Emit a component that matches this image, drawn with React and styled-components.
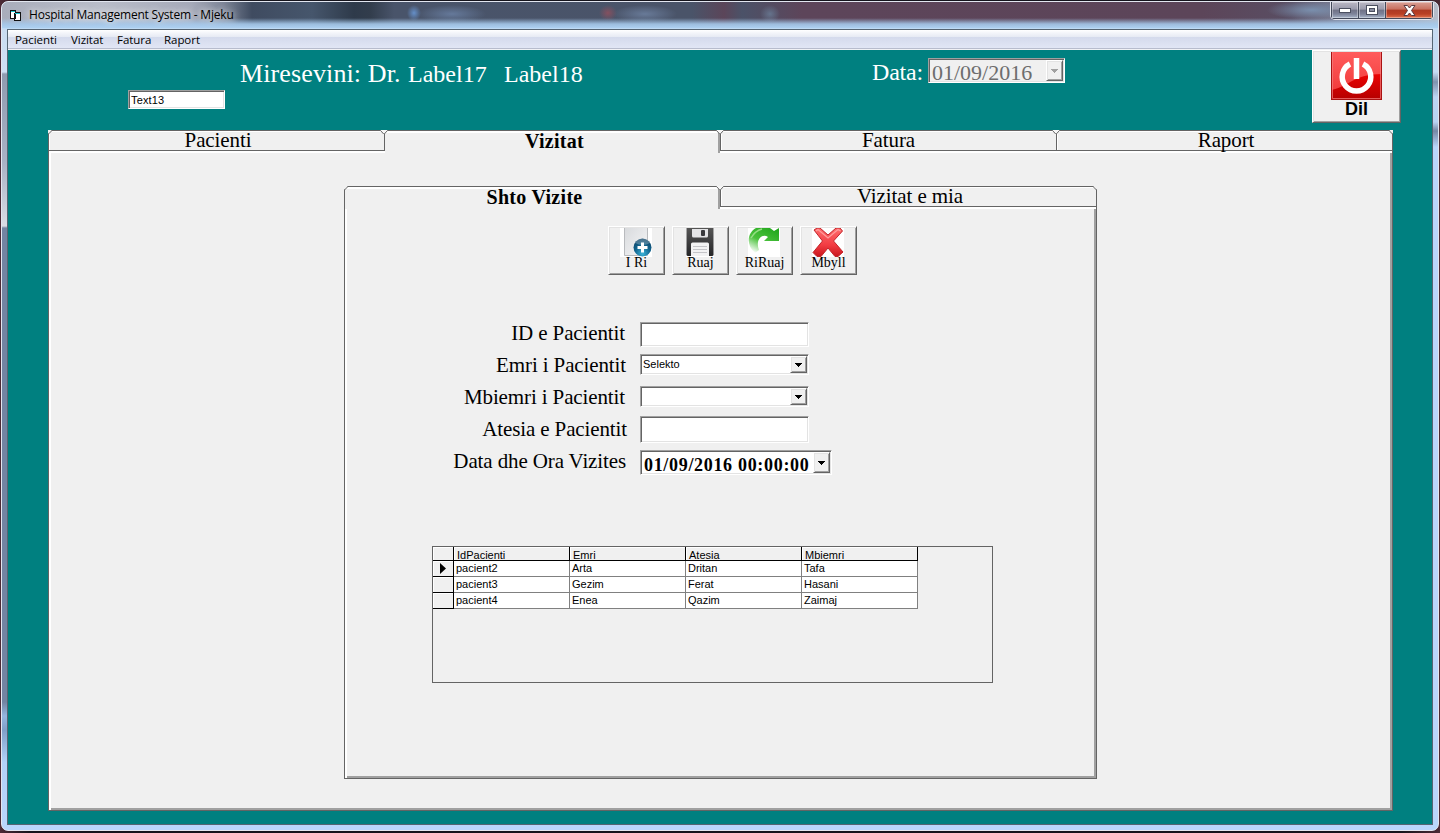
import React from "react";
import styled, { createGlobalStyle, css } from "styled-components";

const serif = `"Liberation Serif", "Times New Roman", serif`;
const sans = `"Liberation Sans", Arial, sans-serif`;
const ui = `"Open Sans", "Noto Sans", sans-serif`;

const face = "#f0f0f0";
const dark = "#646464";
const mid = "#a0a0a0";
const teal = "#008080";

const Global = createGlobalStyle`
  * { box-sizing: border-box; }
  html, body { margin: 0; padding: 0; background: #23262d; overflow: hidden; }
  svg { display: block; }
`;

const sunken = css`
  border: 1px solid;
  border-color: ${mid} #fff #fff ${mid};
  box-shadow: inset 1px 1px 0 ${dark}, inset -1px -1px 0 #e3e3e3;
`;

const raised = css`
  border: 1px solid;
  border-color: #fff ${dark} ${dark} #fff;
  box-shadow: inset 1px 1px 0 #e3e3e3, inset -1px -1px 0 ${mid};
  background: ${face};
`;

const Desktop = styled.div`
  width: 1440px;
  height: 833px;
  padding: 1px 1px 2px;
  background: linear-gradient(90deg, #4c2a35 0, #15141c 30px, #15141c 1400px, #4c2a35);
`;

const Frame = styled.div`
  height: 830px;
  border: 1px solid #e2e6f0;
  border-radius: 7px;
  overflow: hidden;
  padding: 0 5px 5px;
  display: flex;
  flex-direction: column;
  background:
    linear-gradient(180deg, #c4d8ee 0, #cfe0f4 70px, #8f9bb0 72px, #a9b2c4 160px, #d9dce4 224px, #7284a2 226px, #7284a2 700px, #94b6df 714px, #7f9fc8 728px, #b3d2f8 760px, #b9d6fb) left / 6px 100% no-repeat,
    linear-gradient(180deg, #c4d8ee 0, #c7dcf4 70px, #7f93ae 80px, #bcd5f3 95px, #b9d3f2 120px, #7688a5 129px, #b9d6fb 145px) right / 6px 100% no-repeat,
    linear-gradient(#b9d6fb, #b9d6fb);
`;

const TitleBar = styled.div`
  flex: none;
  height: 27px;
  margin: 0 -5px;
  padding-left: 7px;
  display: flex;
  align-items: flex-start;
  background:
    linear-gradient(180deg, transparent 0, transparent 16px, rgba(165, 200, 234, .9) 22px, #add0f1 26px, #cfe4f8 27px),
    radial-gradient(ellipse 7px 8px at 412px 11px, #658fc8, transparent),
    radial-gradient(ellipse 34px 9px at 450px 12px, #65799a, transparent),
    radial-gradient(ellipse 9px 8px at 606px 11px, #85505f, transparent),
    radial-gradient(ellipse 32px 9px at 643px 12px, #687a98, transparent),
    radial-gradient(ellipse 10px 9px at 768px 12px, #65738c, transparent),
    radial-gradient(ellipse 45px 10px at 1310px 8px, #7a8fad, transparent),
    linear-gradient(90deg, #a9adbb 0, #b9bdc9 100px, #a5a9b8 190px, #7c8496 222px, #3f4b60 250px, #46566c 310px, #2e3a4a 352px, #323d4c 368px, #49546a 392px, #4a5469 690px, #5b4559 722px, #4b5268 740px, #5d455a 800px, #5c4559 1200px, #594e63 1290px, #7b7d92 1340px, #b6bdca);
`;

const AppIcon = styled.svg`
  margin-top: 7px;
  flex: none;
`;

const Caption = styled.div`
  margin: 4px auto 0 6px;
  font: 12px/18px ${ui};
  letter-spacing: -0.2px;
  color: #000;
  white-space: nowrap;
  text-shadow: 0 0 6px rgba(255, 255, 255, .9), 0 0 10px rgba(255, 255, 255, .6);
`;

const Controls = styled.div`
  display: flex;
  height: 18px;
  margin-right: 4px;
  border: 1px solid #e4e6ee;
  border-top: 0;
  border-radius: 0 0 5px 5px;
  overflow: hidden;
  box-shadow: inset 0 0 0 1px #3a3f50;
`;

const Control = styled.div`
  width: ${(p) => p.$w}px;
  display: flex;
  align-items: center;
  justify-content: center;
  border: 1px solid #444a5b;
  border-top: 0;
  box-shadow: inset 0 0 0 1px rgba(255, 255, 255, .35);
  background: ${(p) =>
    p.$close
      ? "linear-gradient(180deg, #d9a096 0, #c8705f 45%, #ad3a23 50%, #b94024 75%, #e0714d)"
      : "linear-gradient(180deg, #b9b7c4 0, #9a9bac 45%, #707286 50%, #7d8399 75%, #a7b4c8)"};
  & + & { border-left: 0; }
`;

const Client = styled.div`
  flex: 1;
  border: 1px solid #566573;
  display: flex;
  flex-direction: column;
  background: ${teal};
`;

const MenuBar = styled.div`
  height: 20px;
  flex: none;
  display: flex;
  gap: 14px;
  padding-left: 7px;
  font: 11.5px/20px ${ui};
  color: #000;
  background: linear-gradient(180deg, #fff 0, #f3f5fa 3px, #e6eaf4 7px, #d4daec 7px, #e1e6f5 18px, #b7bccd 18px, #b7bccd 19px, #f0f1f5 19px);
`;

const MenuItem = styled.span`
  width: ${(p) => p.$w}px;
  white-space: nowrap;
  letter-spacing: -0.05px;
`;

const Header = styled.div`
  height: 80px;
  flex: none;
  display: flex;
  align-items: flex-start;
`;

const TextBox = styled.div`
  ${sunken}
  background: #fff;
  width: ${(p) => p.$w}px;
  height: ${(p) => p.$h}px;
  padding-left: 2px;
  font: 11px/${(p) => p.$h - 2}px ${sans};
  color: #000;
`;

const IdBox = styled(TextBox)`
  margin: 40px 0 0 120px;
  line-height: 18px;
  letter-spacing: 0.15px;
`;

const Welcome = styled.div`
  margin: ${(p) => p.$mt || 8}px 0 0 ${(p) => p.$ml}px;
  width: ${(p) => p.$w}px;
  font: ${(p) => p.$size}px/32px ${serif};
  letter-spacing: ${(p) => p.$ls || 0}px;
  color: #fff;
  white-space: nowrap;
`;

const DateBox = styled.div`
  ${sunken}
  display: flex;
  justify-content: space-between;
  width: ${(p) => p.$w}px;
  height: ${(p) => p.$h}px;
  padding: 1px 1px 1px 3px;
  background: ${(p) => (p.$disabled ? face : "#fff")};
  color: ${(p) => (p.$disabled ? "#6d6d6d" : "#000")};
  font: ${(p) => (p.$disabled ? "22px" : "bold 18px")}/${(p) => (p.$disabled ? 25 : 26)}px ${serif};
  letter-spacing: ${(p) => (p.$disabled ? 0 : 0.68)}px;
  white-space: nowrap;
`;

const HeaderDate = styled(DateBox)`
  margin: 8px 0 0 4px;
`;

const DropButton = styled.div`
  ${raised}
  flex: none;
  width: 17px;
  display: flex;
  align-items: center;
  justify-content: center;
`;

const ExitButton = styled.div`
  ${raised}
  width: 89px;
  height: 73px;
  margin-left: 247px;
  padding-top: 1px;
  display: flex;
  flex-direction: column;
  align-items: center;
  font: bold 18px/18px ${sans};
  color: #000;
`;

const TabControl = styled.div`
  width: ${(p) => p.$w}px;
  height: ${(p) => p.$h}px;
  margin: ${(p) => p.$m};
  display: flex;
  flex-direction: column;
`;

const TabStrip = styled.div`
  height: 21px;
  flex: none;
  display: flex;
`;

const Tab = styled.div`
  position: relative;
  width: ${(p) => p.$w}px;
  height: ${(p) => (p.$active ? 23 : 21)}px;
  border-top: 1px solid ${dark};
  border-bottom: ${(p) => (p.$active ? 0 : 1)}px solid ${dark};
  border-left: ${(p) => (p.$edge ? 1 : 0)}px solid ${dark};
  border-right: ${(p) => (p.$active ? 0 : 1)}px solid ${dark};
  box-shadow: ${(p) =>
    p.$active
      ? `inset 0 2px 0 #fff, inset -2px 0 0 ${mid}`
      : "inset 1px 1px 0 #fff"};
  background: ${face};
  color: #000;
  text-align: center;
  font: ${(p) => (p.$active ? "bold 20px" : "21px")}/${(p) => (p.$active ? 21 : 19)}px ${serif};
  letter-spacing: ${(p) => (p.$active ? 0.3 : -0.1)}px;
  padding-left: ${(p) => (p.$active ? 4 : p.$pl ?? 3)}px;
`;

const Notch = styled.svg`
  position: absolute;
  z-index: 2;
  top: -1px;
  ${(p) => (p.$side === "left" ? "left: -1px;" : `right: ${p.$mid ? -4 : -1}px;`)}
`;

const TabPage = styled.div`
  flex: 1;
  border: 1px solid ${dark};
  border-top: 0;
  box-shadow: inset 2px 2px 0 #fff, inset -2px -2px 0 ${mid};
  background: ${face};
  display: flex;
  flex-direction: column;
`;

const Toolbar = styled.div`
  display: flex;
  gap: 7px;
  margin: 19px 0 0 263px;
`;

const ToolButton = styled.div`
  ${raised}
  width: 57px;
  height: 49px;
  padding: 1px 1px 0 0;
  display: flex;
  flex-direction: column;
  align-items: center;
  color: #000;
  font: 14px/16px ${serif};
  white-space: nowrap;
`;

const ToolLabel = styled.span`
  margin: -2px 0 0 1px;
`;

const Form = styled.div`
  display: flex;
  flex-direction: column;
  margin-top: 43px;
`;

const Field = styled.div`
  height: 32px;
  display: flex;
  padding-left: 95px;
`;

const Label = styled.div`
  width: ${(p) => 185 + (p.$dx || 0)}px;
  margin-right: ${(p) => 15 - (p.$dx || 0)}px;
  font: 21px/30px ${serif};
  letter-spacing: -0.12px;
  text-align: right;
  color: #000;
  white-space: nowrap;
`;

const Slot = styled.div`
  padding-top: ${(p) => p.$top}px;
`;

const Combo = styled.div`
  ${sunken}
  width: 169px;
  height: 21px;
  background: #fff;
  display: flex;
  justify-content: space-between;
  padding: 1px 1px 1px 2px;
  font: 11px/17px ${sans};
  color: #000;
`;

const DataGrid = styled.div`
  margin: 68px 0 0 87px;
  width: 561px;
  height: 137px;
  border: 1px solid ${dark};
`;

const GridRow = styled.div`
  display: grid;
  grid-template-columns: 21px repeat(4, 116px);
  grid-template-rows: ${(p) => (p.$head ? 14 : 16)}px;
  font: 11px/${(p) => (p.$head ? 16 : 14)}px ${sans};
  color: #000;
`;

const HeadCell = styled.div`
  border-right: 1px solid #000;
  border-bottom: 1px solid #000;
  box-shadow: inset 1px 1px 0 #fff;
  padding-left: 3px;
  background: ${face};
`;

const Selector = styled(HeadCell)`
  display: flex;
  align-items: center;
  padding-left: 7px;
`;

const Cell = styled.div`
  border-right: 1px solid #808080;
  border-bottom: 1px solid #808080;
  background: #fff;
  padding-left: 2px;
`;

const Arrow = ({ color = "#000" }) => (
  <svg width="7" height="4" viewBox="0 0 7 4" shapeRendering="crispEdges">
    <path d="M0 0h7v1H0zM1 1h5v1H1zM2 2h3v1H2zM3 3h1v1H3z" fill={color} />
  </svg>
);

const MidNotch = () => (
  <Notch $mid width="8" height="5" viewBox="0 0 8 5">
    <path d="M0 0H8L4.5 4H3.5z" fill="#f6f6f6" />
    <path d="M0.3 0.3L3.7 4M7.7 0.3L4.3 4" stroke={dark} fill="none" />
  </Notch>
);

const EndNotch = ({ side }) => (
  <Notch $side={side} width="5" height="5" viewBox="0 0 5 5">
    <g transform={side === "right" ? "translate(5 0) scale(-1 1)" : undefined}>
      <path d="M0 0H4L0 4z" fill={face} />
      <path d="M0.3 4.2L4.2 0.3" stroke={dark} />
    </g>
  </Notch>
);

const NewIcon = () => (
  <svg width="32" height="29" viewBox="0 0 32 29">
    <defs>
      <linearGradient id="page" x1="0" y1="0" x2="1" y2="1">
        <stop offset="0" stopColor="#d8dadd" />
        <stop offset="1" stopColor="#f7f7f8" />
      </linearGradient>
      <radialGradient id="globe" cx=".5" cy=".85" r=".8">
        <stop offset="0" stopColor="#3bb3d8" />
        <stop offset=".55" stopColor="#12658f" />
        <stop offset="1" stopColor="#0d4468" />
      </radialGradient>
    </defs>
    <rect width="32" height="29" fill="#fff" />
    <path d="M4.5 0V27.5H27.5V0" fill="url(#page)" stroke="#b9bbbe" />
    <circle cx="22.5" cy="19.5" r="9" fill="url(#globe)" />
    <path d="M15 15a8.5 8.5 0 0 1 15 0q-7 4-15 0z" fill="#fff" opacity=".25" />
    <path d="M22.5 14.5v10M17.5 19.5h10" stroke="#fff" strokeWidth="3" />
  </svg>
);

const SaveIcon = () => (
  <svg width="32" height="29" viewBox="0 0 32 29">
    <defs>
      <linearGradient id="disk" x1="0" y1="0" x2="0" y2="1">
        <stop offset="0" stopColor="#555" />
        <stop offset="1" stopColor="#252527" />
      </linearGradient>
    </defs>
    <rect x="2" width="28" height="29" fill="#fff" />
    <path d="M2.500 0H29.500V26.5Q29.500 28 28 28H4Q2.500 28 2.500 26.5z" fill="url(#disk)" />
    <path d="M8 1H24V8Q24 9.5 22.5 9.500H9.5Q8 9.5 8 8z" fill="#e4e4e6" />
    <rect x="17" y="2" width="4" height="6" rx="1" fill="#39393c" />
    <path d="M7 16Q7 14.5 8.5 14.5H23.5Q25 14.5 25 16V28H7z" fill="#f2f2f3" />
    <path d="M9 18.5H23M9 21.5H23M9 24.5H23" stroke="#c4c4c8" />
  </svg>
);

const RedoIcon = () => (
  <svg width="32" height="29" viewBox="0 0 32 29">
    <defs>
      <linearGradient id="redo" x1=".8" y1="0" x2=".2" y2="1">
        <stop offset="0" stopColor="#23a81e" />
        <stop offset=".55" stopColor="#4cc23d" />
        <stop offset="1" stopColor="#fff" />
      </linearGradient>
    </defs>
    <rect width="32" height="29" fill="#fff" />
    <path d="M7 25C-2 17 -1 5 8 0H22L26 3L31 0V13H16L20 9C14 5 7 12 11 22Z" fill="url(#redo)" />
    <path d="M3 10Q7 3 14 1" stroke="#95dd83" strokeWidth="1.5" fill="none" />
  </svg>
);

const CloseIcon = () => (
  <svg width="32" height="29" viewBox="0 0 32 29">
    <defs>
      <linearGradient id="cross" x1="0" y1="0" x2="0" y2="1">
        <stop offset="0" stopColor="#ff6d6d" />
        <stop offset=".6" stopColor="#f23c43" />
        <stop offset="1" stopColor="#c9161d" />
      </linearGradient>
    </defs>
    <rect width="32" height="29" fill="#fff" />
    <path d="M2 2L5 0H8L16 7L24 0H28L30.500 3L21.500 13L31 24L26 28.500H23L16 20L9 28.500H5L1 24.500L10.500 13z" fill="url(#cross)" stroke="#c2242a" />
    <path d="M4 3L6 1.500L16 10L26 1.500L28.500 3" stroke="#ff9c9c" strokeWidth="1.300" fill="none" />
  </svg>
);

const PowerIcon = () => (
  <svg width="51" height="48" viewBox="0 0 51 48">
    <defs>
      <linearGradient id="power" x1="0" y1="0" x2="0" y2="1">
        <stop offset="0" stopColor="#ff5c5c" />
        <stop offset="1" stopColor="#ee3434" />
      </linearGradient>
      <linearGradient id="powerLow" x1="0" y1="0" x2="0" y2="1">
        <stop offset="0" stopColor="#ea0303" />
        <stop offset="1" stopColor="#b40000" />
      </linearGradient>
    </defs>
    <rect width="51" height="48" fill="url(#power)" />
    <path d="M0 38C20 34 22 22 51 22V48H0z" fill="url(#powerLow)" />
    <path d="M.5 0V47.500H50.500V0" fill="none" stroke="#a91212" />
    <path d="M1.500 0V46.500H49.500V0" fill="none" stroke="#f58080" opacity=".7" />
    <path d="M19 12A14.300 14.300 0 1 0 32 12" fill="none" stroke="#fff" strokeWidth="5.500" />
    <path d="M25.500 6V27" stroke="#fff" strokeWidth="5.500" />
  </svg>
);

const patients = [
  ["pacient2", "Arta", "Dritan", "Tafa"],
  ["pacient3", "Gezim", "Ferat", "Hasani"],
  ["pacient4", "Enea", "Qazim", "Zaimaj"],
];

export default function App() {
  return (
    <Desktop>
      <Global />
      <Frame>
        <TitleBar>
          <AppIcon width="14" height="13" viewBox="0 0 14 13" shapeRendering="crispEdges">
            <path d="M1 1h6v2H1zM5 3h7v2H5z" fill="#111" />
            <path d="M1.500 2.500H6.500V9.500H1.500zM5.500 4.500H11.500V11.500H5.500z" fill="#fff" stroke="#111" />
            <path d="M2 2h4v1H2zM6 4h5v1H6z" fill="#1cc6cf" />
          </AppIcon>
          <Caption>Hospital Management System - Mjeku</Caption>
          <Controls>
            <Control $w={28}>
              <svg width="13" height="6"><rect x=".5" y="1.500" width="11" height="4" fill="#fff" stroke="#4b5060" /></svg>
            </Control>
            <Control $w={27}>
              <svg width="12" height="10">
                <rect x=".5" y=".5" width="11" height="9" fill="#fff" stroke="#4b5060" />
                <rect x="3.500" y="3.500" width="5" height="3" fill="#8d90a3" stroke="#4b5060" />
              </svg>
            </Control>
            <Control $w={47} $close>
              <svg width="13" height="11" viewBox="0 0 13 11">
                <path d="M1 .5H4.500L6.500 3L8.500 .5H12L8.500 5.500L12 10.500H8.500L6.500 8L4.500 10.500H1L4.500 5.500z" fill="#fff" stroke="#5a3a40" />
              </svg>
            </Control>
          </Controls>
        </TitleBar>
        <Client>
          <MenuBar>
            <MenuItem $w={42}>Pacienti</MenuItem>
            <MenuItem $w={32}>Vizitat</MenuItem>
            <MenuItem $w={33}>Fatura</MenuItem>
            <MenuItem $w={36}>Raport</MenuItem>
          </MenuBar>
          <Header>
            <IdBox $w={97} $h={19}>Text13</IdBox>
            <Welcome $ml={15} $w={163} $size={26} $ls={0.12}>Miresevini: Dr.</Welcome>
            <Welcome $ml={5} $w={82} $size={24}>Label17</Welcome>
            <Welcome $ml={14} $w={82} $size={24}>Label18</Welcome>
            <Welcome $ml={286} $mt={6} $w={52} $size={24} $ls={-0.2}>Data:</Welcome>
            <HeaderDate $w={137} $h={25} $disabled>
              01/09/2016
              <DropButton><Arrow color="#a0a0a0" /></DropButton>
            </HeaderDate>
            <ExitButton>
              <PowerIcon />
              Dil
            </ExitButton>
          </Header>
          <TabControl $w={1345} $h={681} $m="0 0 0 40px">
            <TabStrip>
              <Tab $w={337} $edge><EndNotch side="left" />Pacienti<MidNotch /></Tab>
              <Tab $w={335} $active>Vizitat<MidNotch /></Tab>
              <Tab $w={337} $edge $pl={0}>Fatura<MidNotch /></Tab>
              <Tab $w={336}>Raport<EndNotch side="right" /></Tab>
            </TabStrip>
            <TabPage>
              <TabControl $w={753} $h={593} $m="35px 0 0 295px">
                <TabStrip>
                  <Tab $w={376} $active $edge>
                    <EndNotch side="left" />Shto Vizite<MidNotch />
                  </Tab>
                  <Tab $w={377} $edge>Vizitat e mia<EndNotch side="right" /></Tab>
                </TabStrip>
                <TabPage>
                  <Toolbar>
                    <ToolButton><NewIcon /><ToolLabel>I Ri</ToolLabel></ToolButton>
                    <ToolButton><SaveIcon /><ToolLabel>Ruaj</ToolLabel></ToolButton>
                    <ToolButton><RedoIcon /><ToolLabel>RiRuaj</ToolLabel></ToolButton>
                    <ToolButton><CloseIcon /><ToolLabel>Mbyll</ToolLabel></ToolButton>
                  </Toolbar>
                  <Form>
                    <Field>
                      <Label>ID e Pacientit</Label>
                      <Slot $top={4}><TextBox $w={169} $h={25} /></Slot>
                    </Field>
                    <Field>
                      <Label $dx={1}>Emri i Pacientit</Label>
                      <Slot $top={4}><Combo>Selekto<DropButton><Arrow /></DropButton></Combo></Slot>
                    </Field>
                    <Field>
                      <Label>Mbiemri i Pacientit</Label>
                      <Slot $top={4}><Combo><span /><DropButton><Arrow /></DropButton></Combo></Slot>
                    </Field>
                    <Field>
                      <Label $dx={2}>Atesia e Pacientit</Label>
                      <Slot $top={2}><TextBox $w={169} $h={27} /></Slot>
                    </Field>
                    <Field>
                      <Label $dx={1}>Data dhe Ora Vizites</Label>
                      <Slot $top={4}>
                        <DateBox $w={192} $h={25}>
                          01/09/2016 00:00:00
                          <DropButton><Arrow /></DropButton>
                        </DateBox>
                      </Slot>
                    </Field>
                  </Form>
                  <DataGrid>
                    <GridRow $head>
                      <Selector />
                      {["IdPacienti", "Emri", "Atesia", "Mbiemri"].map((h) => (
                        <HeadCell key={h}>{h}</HeadCell>
                      ))}
                    </GridRow>
                    {patients.map((row, i) => (
                      <GridRow key={row[0]}>
                        <Selector>
                          {i === 0 && (
                            <svg width="6" height="11" viewBox="0 0 6 11"><path d="M0 0L6 5.500L0 11z" /></svg>
                          )}
                        </Selector>
                        {row.map((v) => (
                          <Cell key={v}>{v}</Cell>
                        ))}
                      </GridRow>
                    ))}
                  </DataGrid>
                </TabPage>
              </TabControl>
            </TabPage>
          </TabControl>
        </Client>
      </Frame>
    </Desktop>
  );
}
